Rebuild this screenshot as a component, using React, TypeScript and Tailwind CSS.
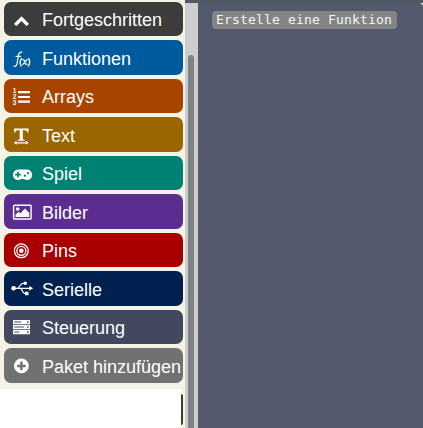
import type { ReactNode } from 'react';

// Icons share one slot: 38 units wide, x starting at 4.
function Slot({ children }: { children: ReactNode }) {
  return (
    <svg className="h-[34px] w-[38px] shrink-0 fill-white" viewBox="4 0 38 34">
      {children}
    </svg>
  );
}

const icons: Record<string, ReactNode> = {
  up: (
    <path
      transform="translate(13.5 10.3) scale(0.00893)"
      d="M1683 1331l-166 165q-19 19-45 19t-45-19l-531-531-531 531q-19 19-45 19t-45-19l-166-165q-19-19-19-45.500t19-45.500l742-741q19-19 45-19t45 19l742 741q19 19 19 45.500t-19 45.500z"
    />
  ),
  fx: (
    <g fill="none" stroke="white" strokeLinecap="round">
      <path d="M14 25.200q2.200.7 3-2.500l1.500-8.500q.6-3.500 3.300-3.100M16 15.300h4.600" strokeWidth="1.200" />
      <path d="M21.600 17.600q-2.800 3.500-.4 7.400M28.700 17.600q2.200 3.500-.4 7.400" strokeWidth="1.400" />
      <path d="M22.800 18.900q1.400-.5 1.900 1.300l.6 2.200q.5 1.300 1.600.7M27 18.800l-4.200 4.600" strokeWidth="1.300" />
    </g>
  ),
  list: (
    <g>
      <path d="M18 12h12v2.200H18zM18 16.900h12v2.200H18zM18 21.600h12v2.200H18z" />
      <g fontFamily="Liberation Sans, sans-serif" fontSize="6.500" fontWeight="700">
        <text x="12.800" y="14.200">1</text>
        <text x="12.800" y="19.900">2</text>
        <text x="12.800" y="25.600">3</text>
      </g>
    </g>
  ),
  text: (
    <path d="M14 10.500h14.500v4h-1.100q-.4-2.200-2.400-2.200h-2.200v8.700q0 .8 2 .9v.9h-7.100v-.9q2-.1 2-.9v-8.700h-2.300q-1.900 0-2.300 2.200H14zM13.800 24.800l2.700-2v1.400h9.400v-1.400l2.700 2-2.700 2v-1.400h-9.400v1.400z" />
  ),
  game: (
    <path
      fillRule="evenodd"
      d="M18.200 13.600h8.700a5.200 5.200 0 1 1-3 9.400h-2.700a5.200 5.200 0 1 1-3-9.400zM17.100 15.800v2h-2v1.700h2v2h1.700v-2h2v-1.700h-2v-2zM24.900 18.500a1.100 1.100 0 1 0 .01 0M27.900 16a1.100 1.100 0 1 0 .01 0"
    />
  ),
  image: (
    <g>
      <rect x="13.600" y="11.200" width="17.500" height="13.800" rx=".8" fill="none" stroke="white" strokeWidth="1.400" />
      <circle cx="17.700" cy="15" r="1.800" />
      <path d="M15.500 23v-2.300l3-3 1.800 1.700 4.700-4.800 4.300 4.300V23z" />
    </g>
  ),
  pin: (
    <g fill="none" stroke="white" strokeWidth="1.300">
      <circle cx="21.300" cy="17.800" r="6.900" />
      <circle cx="21.300" cy="17.800" r="4.500" />
      <circle cx="21.300" cy="17.800" r="2.300" fill="white" stroke="none" />
    </g>
  ),
  usb: (
    <g>
      <path d="M13 17.300h17M17 17.300c3 0 3-5 6-5h2M20 17.300c2.500 0 2 5.300 5 5.300h2" fill="none" stroke="white" strokeWidth="1.200" />
      <circle cx="13.600" cy="17.300" r="2.300" />
      <circle cx="25.300" cy="12.300" r="1.700" />
      <path d="M25 20.800h3.500v3.500H25zM29.300 15l3.900 2.300-3.900 2.300z" />
    </g>
  ),
  server: (
    <path fillRule="evenodd" d="M13 10h17v4.200H13zM14.200 11.500v1.100h7v-1.100zM27 11.200v1.600h1.600v-1.600zM13 15h17v4.200H13zM14.200 16.500v1.100h10v-1.100zM27 16.200v1.600h1.600v-1.600zM13 20h17v4.200H13zM14.200 21.500v1.100h5v-1.100zM27 21.200v1.600h1.600v-1.600z" />
  ),
  plus: (
    <path
      transform="translate(12.800 9.300) scale(0.0096)"
      d="M1344 960v-128q0-26-19-45t-45-19h-256v-256q0-26-19-45t-45-19h-128q-26 0-45 19t-19 45v256h-256q-26 0-45 19t-19 45v128q0 26 19 45t45 19h256v256q0 26 19 45t45 19h128q26 0 45-19t19-45v-256h256q26 0 45-19t19-45zm320-64q0 209-103 385.500t-279.500 279.500-385.500 103-385.500-103-279.500-279.500-103-385.500 103-385.500 279.500-279.500 385.500-103 385.500 103 279.500 279.500 103 385.500z"
    />
  ),
};

const categories = [
  { label: 'Fortgeschritten', icon: 'up', tone: 'bg-[#3c3c3c]' },
  { label: 'Funktionen', icon: 'fx', tone: 'bg-[#005a9e]' },
  { label: 'Arrays', icon: 'list', tone: 'bg-[#a94400]' },
  { label: 'Text', icon: 'text', tone: 'bg-[#996600]' },
  { label: 'Spiel', icon: 'game', tone: 'bg-[#008272]' },
  { label: 'Bilder', icon: 'image', tone: 'bg-[#5c2d91]' },
  { label: 'Pins', icon: 'pin', tone: 'bg-[#a80000]' },
  { label: 'Serielle', icon: 'usb', tone: 'bg-[#002050]' },
  { label: 'Steuerung', icon: 'server', tone: 'bg-[#42495f]' },
  { label: 'Paket hinzufügen', icon: 'plus', tone: 'bg-[#717171]' },
];

export default function App() {
  return (
    <div className="flex h-[428px] w-[423px] overflow-hidden bg-[#f5f3e6] font-['Liberation_Sans',Arial,sans-serif]">
      <aside className="flex w-[185px] shrink-0 flex-col">
        <nav className="flex h-[389px] flex-col gap-[3.960px] pt-[1.950px] pl-[4px]">
          {categories.map((c) => (
            <div
              key={c.label}
              className={`flex h-[34.500px] w-[179px] shrink-0 items-center rounded-[7px] text-[18px] leading-[34px] whitespace-nowrap text-white ${c.tone}`}
            >
              <Slot>{icons[c.icon]}</Slot>
              <span className="pt-[2.500px]">{c.label}</span>
            </div>
          ))}
        </nav>
        <div className="flex flex-1">
          <div className="w-[181px] bg-white" />
          <div className="mt-[5px] h-[31px] w-[2px] rounded-r-[2px] bg-[#3c3c3c]" />
        </div>
      </aside>
      <div className="flex min-w-0 flex-1 flex-col bg-[#50595f]">
        <div className="h-[3px] shrink-0" />
        <div className="flex min-h-0 flex-1 bg-white">
          <div className="w-[13px] shrink-0 bg-[#cdcdcd] pt-[52px] pl-[3px]">
            <div className="h-full w-[6px] rounded-t-[3px] bg-[#7e8485]" />
          </div>
          <main className="flex-1 rounded-tr-[4px] bg-[#545a6e] pt-[8px] pl-[14px]">
            <div className="h-[18px] w-[185px] rounded-[4px] bg-[#848484] pl-[4px] font-['DejaVu_Sans_Mono',monospace] text-[13px] leading-[18px] tracking-[0.174px] whitespace-nowrap text-[#f4f4f4]">
              Erstelle eine Funktion
            </div>
          </main>
        </div>
      </div>
    </div>
  );
}
